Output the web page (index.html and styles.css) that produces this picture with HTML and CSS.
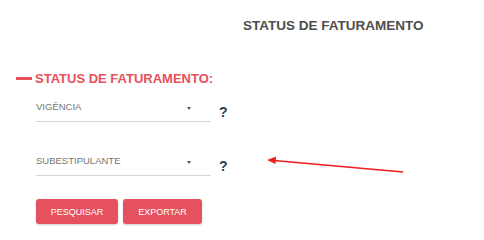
FILE: index.html
```html
<!DOCTYPE html>
<html lang="pt-BR">
<head>
<meta charset="utf-8">
<link rel="stylesheet" href="styles.css">
</head>
<body>
<div class="page">
  <h1 class="page-title">STATUS DE FATURAMENTO</h1>
  <h2 class="section-title"><span class="dash"></span>STATUS DE FATURAMENTO:</h2>
  <div class="field-row">
    <div class="select">
      <span class="select-label">VIGÊNCIA</span>
      <span class="caret"></span>
    </div>
    <span class="help">?</span>
  </div>
  <div class="field-row second">
    <div class="select">
      <span class="select-label">SUBESTIPULANTE</span>
      <span class="caret"></span>
    </div>
    <span class="help">?</span>
  </div>
  <div class="actions">
    <button class="btn btn-search">PESQUISAR</button>
    <button class="btn btn-export">EXPORTAR</button>
  </div>
  <svg class="annot-arrow" width="484" height="240" viewBox="0 0 484 240">
    <line x1="403" y1="172" x2="274" y2="160.5" stroke="#f21d1d" stroke-width="1.6"/>
    <polygon points="267,160 276,156.5 275.5,164" fill="#f21d1d"/>
  </svg>
</div>
</body>
</html>
```
FILE: styles.css
```css
html, body {
  margin: 0;
  padding: 0;
  background: #fff;
}
.page {
  position: relative;
  width: 484px;
  height: 240px;
  font-family: "Liberation Sans", Arial, sans-serif;
  overflow: hidden;
}
.page-title {
  margin: 0;
  padding: 18px 0 0 243px;
  font-size: 13.5px;
  font-weight: bold;
  color: #4d4d4d;
  line-height: 15px;
}
.section-title {
  margin: 38px 0 0 16px;
  display: flex;
  align-items: center;
  font-size: 13px;
  font-weight: bold;
  color: #e8505b;
  line-height: 15px;
}
.dash {
  display: inline-block;
  width: 16px;
  height: 3px;
  background: #e8505b;
  margin-right: 3px;
}
.field-row {
  display: flex;
  align-items: flex-end;
  margin: 12px 0 0 36px;
}
.field-row.second {
  margin-top: 30px;
}
.select {
  width: 175px;
  height: 23px;
  border-bottom: 1px solid #d6d6d6;
  display: flex;
  align-items: flex-start;
  justify-content: space-between;
}
.select-label {
  font-size: 9.5px;
  color: #757575;
  line-height: 12px;
  padding-top: 3px;
}
.caret {
  width: 0;
  height: 0;
  border-left: 2.5px solid transparent;
  border-right: 2.5px solid transparent;
  border-top: 3px solid #555;
  margin: 9px 20px 0 0;
}
.help {
  font-size: 14px;
  font-weight: bold;
  color: #2c3e50;
  margin: 0 0 3px 8px;
  line-height: 14px;
}
.actions {
  display: flex;
  gap: 5px;
  margin: 23px 0 0 36px;
}
.btn {
  font-family: "Liberation Sans", Arial, sans-serif;
  font-size: 9px;
  color: #fff;
  background: #e5525d;
  border: none;
  border-radius: 3px;
  height: 25px;
  padding: 0;
  box-shadow: 0 1px 2px rgba(0,0,0,0.2);
}
.btn-search { width: 82px; }
.btn-export { width: 79px; }
.annot-arrow {
  position: absolute;
  left: 0;
  top: 0;
  pointer-events: none;
}
```
